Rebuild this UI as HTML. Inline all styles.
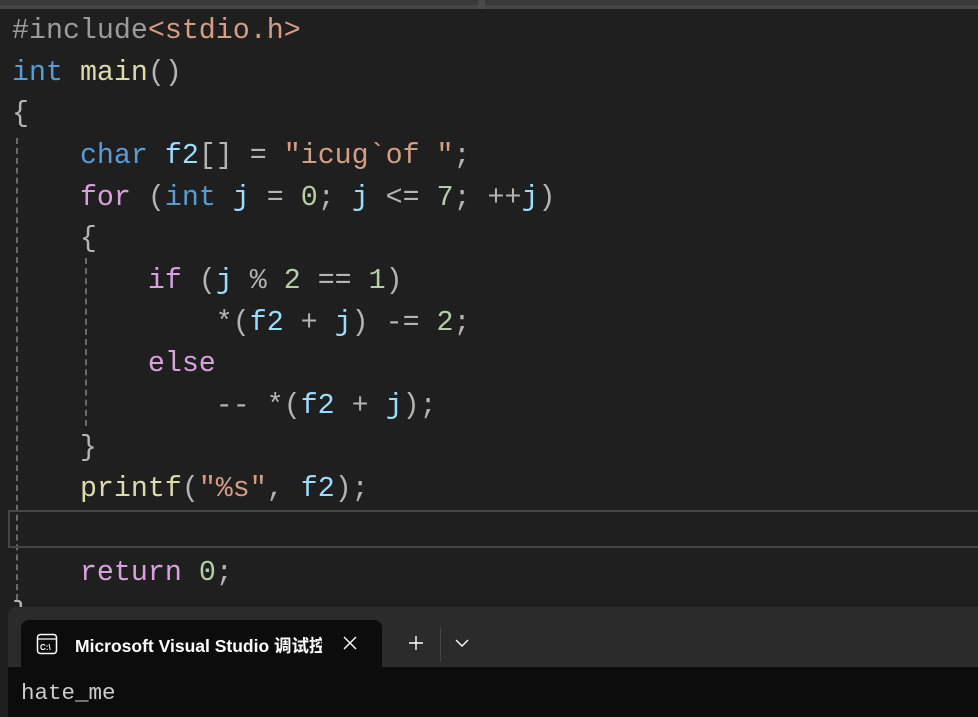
<!DOCTYPE html>
<html><head><meta charset="utf-8"><style>
body{margin:0;width:978px;height:709px;overflow:hidden;background:#1f1f1f;position:relative;font-family:"Liberation Mono",monospace}
.top{position:absolute;left:0;top:0;width:978px;height:5px;background:#3a3a3a}
.top2{position:absolute;left:0;top:5px;width:978px;height:4px;background:#464646}
.code{position:absolute;left:12px;top:11px;font-size:28.3px;line-height:41.65px;color:#b4b4b4;white-space:pre}
.k{color:#569cd6}.c{color:#d8a0df}.f{color:#dcdcaa}.v{color:#9cdcfe}.s{color:#d69d85}.n{color:#b5cea8}.p{color:#9b9b9b}
.guide{position:absolute;width:0;border-left:2px dashed #6a6a6a}
.cur{position:absolute;left:8px;top:510px;width:975px;height:34px;border:2px solid #464646;border-right:none}
.term{position:absolute;left:8px;top:607px;width:980px;height:110px;background:#2b2b2b;border-radius:8px 0 0 0}
.tab{position:absolute;left:21px;top:620px;width:361px;height:50px;background:#0c0c0c;border-radius:8px 8px 0 0}
.body{position:absolute;left:8px;top:667px;width:980px;height:50px;background:#0c0c0c}
.tt{position:absolute;left:75px;top:633px;font-family:"Liberation Sans","Noto Sans CJK SC",sans-serif;font-size:17.5px;font-weight:bold;color:#fff;white-space:nowrap;width:247px;overflow:hidden}
.out{position:absolute;left:21px;top:680px;font-size:22.5px;color:#cccccc}
</style></head><body>
<div class="top"></div><div class="top2"></div>
<div class="top" style="left:478px;width:7px;height:9px;background:#4a4a4a"></div>
<div class="guide" style="left:16px;top:138px;height:462px"></div>
<div class="guide" style="left:85px;top:258px;height:168px"></div>
<div class="cur"></div>
<div class="code"><span class="p">#include</span><span class="s">&lt;stdio.h&gt;</span>
<span class="k">int</span> <span class="f">main</span>()
{
    <span class="k">char</span> <span class="v">f2</span>[] = <span class="s">"icug`of "</span>;
    <span class="c">for</span> (<span class="k">int</span> <span class="v">j</span> = <span class="n">0</span>; <span class="v">j</span> &lt;= <span class="n">7</span>; ++<span class="v">j</span>)
    {
        <span class="c">if</span> (<span class="v">j</span> % <span class="n">2</span> == <span class="n">1</span>)
            *(<span class="v">f2</span> + <span class="v">j</span>) -= <span class="n">2</span>;
        <span class="c">else</span>
            -- *(<span class="v">f2</span> + <span class="v">j</span>);
    }
    <span class="f">printf</span>(<span class="s">"%s"</span>, <span class="v">f2</span>);

    <span class="c">return</span> <span class="n">0</span>;
}</div>
<div class="term"></div>
<div class="tab"></div>
<div class="body"></div>
<svg style="position:absolute;left:36px;top:633px" width="22" height="22" viewBox="0 0 22 22"><rect x="1.5" y="1.5" width="19" height="19" rx="3" fill="none" stroke="#fff" stroke-width="1.5"/><line x1="1.5" y1="6" x2="20.5" y2="6" stroke="#fff" stroke-width="1.3"/><text x="4" y="17" font-size="8" font-weight="bold" fill="#fff" font-family="Liberation Sans">C:\</text></svg>
<div class="tt">Microsoft Visual Studio 调试控制台</div>
<svg style="position:absolute;left:343px;top:636px" width="14" height="14"><path d="M1 1L13 13M13 1L1 13" stroke="#fff" stroke-width="1.4"/></svg>
<svg style="position:absolute;left:408px;top:635px" width="16" height="16"><path d="M8 1V15M1 8H15" stroke="#fff" stroke-width="1.4"/></svg>
<div style="position:absolute;left:440px;top:627px;width:1px;height:35px;background:#444"></div>
<svg style="position:absolute;left:455px;top:639px" width="14" height="9"><path d="M1 1L7 7L13 1" stroke="#fff" stroke-width="1.4" fill="none"/></svg>
<div class="out">hate_me</div>
</body></html>
